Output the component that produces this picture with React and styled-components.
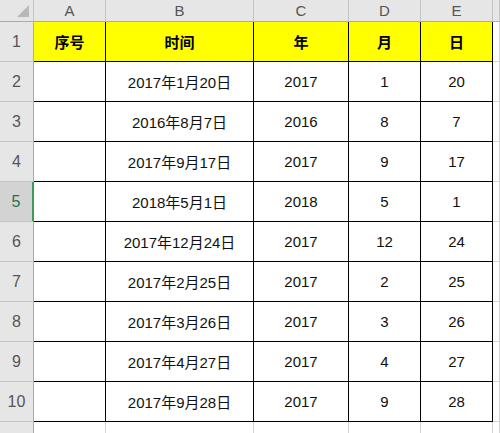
import React from "react";
import styled, { createGlobalStyle, css } from "styled-components";

const GlobalStyle = createGlobalStyle`
  html, body {
    margin: 0;
    padding: 0;
    background: #ffffff;
    overflow: hidden;
  }
`;

const columns = ["A", "B", "C", "D", "E", ""];
const titles = ["序号", "时间", "年", "月", "日"];

const rows = [
  ["", "2017年1月20日", "2017", "1", "20"],
  ["", "2016年8月7日", "2016", "8", "7"],
  ["", "2017年9月17日", "2017", "9", "17"],
  ["", "2018年5月1日", "2018", "5", "1"],
  ["", "2017年12月24日", "2017", "12", "24"],
  ["", "2017年2月25日", "2017", "2", "25"],
  ["", "2017年3月26日", "2017", "3", "26"],
  ["", "2017年4月27日", "2017", "4", "27"],
  ["", "2017年9月28日", "2017", "9", "28"],
];

const SELECTED_ROW = 5;

const Sheet = styled.div`
  width: 500px;
  height: 433px;
  overflow: hidden;
  display: grid;
  grid-template-columns: 34px 72px 148px 95px 72px 72px 1fr;
  grid-template-rows: 22px repeat(11, 40px);
  font-family: "Liberation Sans", "Noto Sans CJK SC", sans-serif;
`;

const Corner = styled.div`
  background: #e6e6e6;
  border-right: 1px solid #c4c4c4;
  border-bottom: 1px solid #ababab;
  box-sizing: border-box;
  position: relative;

  &::after {
    content: "";
    position: absolute;
    right: 4px;
    bottom: 4px;
    width: 0;
    height: 0;
    border-left: 12px solid transparent;
    border-bottom: 12px solid #b9b9b9;
  }
`;

const ColHead = styled.div`
  display: flex;
  align-items: center;
  justify-content: center;
  background: #e6e6e6;
  color: #555;
  font-size: 15px;
  border-right: 1px solid #c4c4c4;
  border-bottom: 1px solid #ababab;
  box-sizing: border-box;
`;

const RowHead = styled.div`
  display: flex;
  align-items: center;
  justify-content: center;
  background: ${(p) => (p.$active ? "#d3d3d3" : "#e6e6e6")};
  color: ${(p) => (p.$active ? "#217346" : "#555")};
  font-size: 16px;
  border-right: ${(p) => (p.$active ? "2px solid #3f9a5c" : "1px solid #ababab")};
  border-bottom: 1px solid #c4c4c4;
  box-sizing: border-box;
`;

const Cell = styled.div`
  display: flex;
  align-items: center;
  justify-content: center;
  box-sizing: border-box;
  font-size: 15px;
  color: #111;
  background: ${(p) => (p.$fill ? "#ffff00" : "#ffffff")};
  border-right: 1px solid ${(p) => (p.$ruled ? "#000" : "#d4d4d4")};
  border-bottom: 1px solid ${(p) => (p.$ruled ? "#000" : "#d4d4d4")};
  ${(p) =>
    p.$bold &&
    css`
      font-weight: 700;
      color: #000;
    `}
`;

export default function App() {
  return (
    <>
      <GlobalStyle />
      <Sheet>
        <Corner />
        {columns.map((c, i) => (
          <ColHead key={"h" + i}>{c}</ColHead>
        ))}

        <RowHead>1</RowHead>
        {titles.map((t) => (
          <Cell key={t} $fill $bold $ruled>
            {t}
          </Cell>
        ))}
        <Cell />

        {rows.map((row, r) => (
          <React.Fragment key={r}>
            <RowHead $active={r + 2 === SELECTED_ROW}>{r + 2}</RowHead>
            {row.map((v, c) => (
              <Cell key={c} $ruled>
                {v}
              </Cell>
            ))}
            <Cell />
          </React.Fragment>
        ))}

        <RowHead>11</RowHead>
        {columns.map((c, i) => (
          <Cell key={"e" + i} />
        ))}
      </Sheet>
    </>
  );
}
